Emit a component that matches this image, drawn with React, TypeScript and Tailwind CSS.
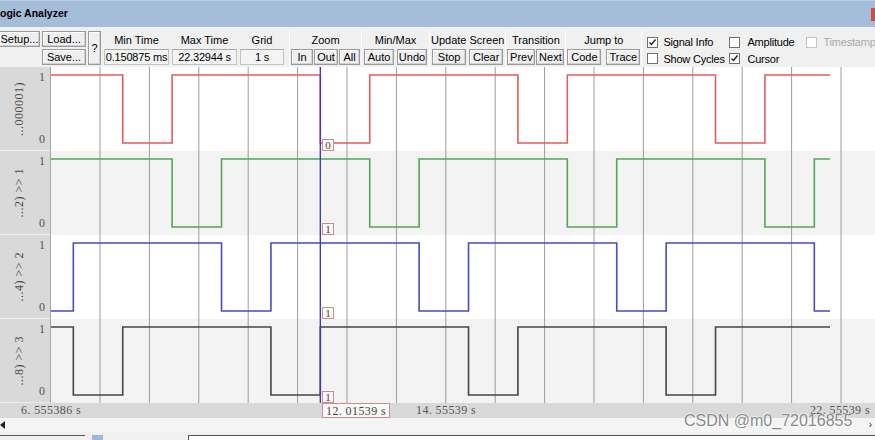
import React from "react";

// plot geometry, page x of grid line k = GRID0 + STEP * k
const GRID0 = 50.6;
const STEP = 49.4;
const PLOT_LEFT = 51;
const END_X = 830;
const HI = 8;
const LO = 76;

const xAt = (k: number) => GRID0 + STEP * k - PLOT_LEFT;

type Signal = {
  name: string;
  color: string;
  startHigh: boolean;
  edges: number[];
  cursor: string;
  alt: boolean;
};

const signals: Signal[] = [
  { name: "...000001)", color: "#e25d5d", startHigh: true, edges: [1, 2, 5, 6, 9, 10, 13, 14], cursor: "0", alt: false },
  { name: "...2) >> 1", color: "#55a655", startHigh: true, edges: [2, 3, 6, 7, 10, 11, 14, 15], cursor: "1", alt: true },
  { name: "...4) >> 2", color: "#4a4ac4", startHigh: false, edges: [0, 3, 4, 7, 8, 11, 12, 15], cursor: "1", alt: false },
  { name: "...8) >> 3", color: "#454545", startHigh: true, edges: [0, 1, 4, 5, 8, 9, 12, 13], cursor: "1", alt: true },
];

const gridLines = Array.from({ length: 16 }, (_, i) => xAt(i + 1));
const CURSOR_X = xAt(5.46);

function Btn({ label, w }: { label: string; w: string }) {
  return (
    <div
      className={`${w} h-[16px] flex items-center justify-center border border-[#9a9a9a] bg-[#efefef] shadow-[inset_-1px_-1px_0_#d2d2d2,inset_1px_1px_0_#ffffff] leading-none`}
    >
      {label}
    </div>
  );
}

function Field({ value, w }: { value: string; w: string }) {
  return (
    <div className={`${w} h-[16px] flex items-center justify-center border border-[#c4c4c4] border-t-[#a8a8a8] bg-[#f4f4f4] leading-none tracking-[-0.2px]`}>
      {value}
    </div>
  );
}

function Sep() {
  return <div className="w-px self-stretch bg-[#c8c8c8] border-r border-white" />;
}

function Check({ checked, disabled }: { checked?: boolean; disabled?: boolean }) {
  return (
    <div
      className={`w-[11px] h-[11px] shrink-0 border bg-white flex items-center justify-center ${
        disabled ? "border-[#c4c4c4]" : "border-[#707070]"
      }`}
    >
      {checked && (
        <svg width="9" height="9" viewBox="0 0 9 9">
          <path d="M1.5 4.5 L3.5 6.5 L7.5 1.5" fill="none" stroke="#222" strokeWidth="1.4" />
        </svg>
      )}
    </div>
  );
}

function Group({ title, children }: { title: string; children: React.ReactNode }) {
  return (
    <div className="flex flex-col items-center">
      <div className="h-[18px] flex items-center leading-none">{title}</div>
      <div className="flex gap-[1px]">{children}</div>
    </div>
  );
}

function Row({ s }: { s: Signal }) {
  let y = s.startHigh ? HI : LO;
  let d = `M0 ${y}`;
  for (const e of s.edges) {
    const x = xAt(e + 0.46);
    d += ` L${x} ${y}`;
    y = y === HI ? LO : HI;
    d += ` L${x} ${y}`;
  }
  d += ` L${END_X - PLOT_LEFT} ${y}`;

  return (
    <div className={`flex h-[84px] ${s.alt ? "bg-[#f3f3f3]" : "bg-white"}`}>
      <div className="relative w-[51px] shrink-0 bg-[#d9d9d9] border-r border-[#a3a3a3] border-b border-b-[#ededed] font-['Liberation_Serif',serif] text-[12px] text-[#555]">
        <span className="absolute right-[5px] top-[1px]">1</span>
        <span className="absolute right-[5px] bottom-[2px]">0</span>
        <div className="absolute left-[10px] top-0 bottom-0 flex items-center">
          <span className="[writing-mode:vertical-rl] rotate-180 whitespace-pre text-[12px] tracking-[0.5px] text-[#4a4a4a]">
            {s.name}
          </span>
        </div>
      </div>
      <div className="relative flex-1">
        <svg className="absolute inset-0" width="824" height="84">
          {gridLines.map((x) => (
            <line key={x} x1={x} y1={0} x2={x} y2={84} stroke="#9c9c9c" strokeWidth="1" />
          ))}
          <path d={d} fill="none" stroke={s.color} strokeWidth="1.6" />
          <line x1={CURSOR_X} y1={0} x2={CURSOR_X} y2={84} stroke="#3a3ac8" strokeWidth="1.4" />
        </svg>
        <span className="absolute left-[271px] top-[72px] w-[12px] h-[12px] border border-[#cf8a8a] bg-[#f8f8f8] flex items-center justify-center font-['Liberation_Serif',serif] text-[11px] leading-none text-[#444]">
          {s.cursor}
        </span>
      </div>
    </div>
  );
}

export default function App() {
  return (
    <div className="relative w-[875px] h-[440px] overflow-hidden bg-[#f0f0f0] font-['Liberation_Sans',Arial,sans-serif] text-[11px] text-black">
      {/* title bar */}
      <div className="h-[27px] bg-[#a4bdd8] border-t border-[#b8cde3] flex items-center justify-between">
        <span className="font-bold text-[10.5px]">ogic Analyzer</span>
        <div className="w-[4px] h-[13px] bg-[#d24b43] mt-[1px]" />
      </div>

      {/* toolbar */}
      <div className="h-[40px] flex items-stretch pt-[4px] pb-[2px] whitespace-nowrap">
        <div className="flex gap-[2px] -ml-[1px]">
          <div className="flex flex-col">
            <Btn label="Setup..." w="w-[41px]" />
          </div>
          <div className="flex flex-col gap-[2px]">
            <Btn label="Load..." w="w-[44px]" />
            <Btn label="Save..." w="w-[44px]" />
          </div>
          <div className="w-[13px] h-[34px] flex items-center justify-center border border-[#9a9a9a] bg-[#efefef] shadow-[inset_-1px_-1px_0_#d2d2d2,inset_1px_1px_0_#ffffff]">
            ?
          </div>
        </div>
        <div className="flex gap-[3px] ml-[3px] mr-[5px]">
          <Group title="Min Time">
            <Field value="0.150875 ms" w="w-[65px]" />
          </Group>
          <Group title="Max Time">
            <Field value="22.32944 s" w="w-[65px]" />
          </Group>
          <Group title="Grid">
            <Field value="1 s" w="w-[44px]" />
          </Group>
        </div>
        <Sep />
        <div className="px-[1px]">
          <Group title="Zoom">
            <Btn label="In" w="w-[22px]" />
            <Btn label="Out" w="w-[24px]" />
            <Btn label="All" w="w-[21px]" />
          </Group>
        </div>
        <div className="w-[1px]" />
        <Sep />
        <div className="px-[2px]">
          <Group title="Min/Max">
            <Btn label="Auto" w="w-[30px]" />
            <div className="w-px" />
            <Btn label="Undo" w="w-[30px]" />
          </Group>
        </div>
        <Sep />
        <div className="px-[1px]">
          <Group title="Update Screen">
            <Btn label="Stop" w="w-[34px]" />
            <div className="w-px" />
            <Btn label="Clear" w="w-[34px]" />
          </Group>
        </div>
        <Sep />
        <div className="px-[1px]">
          <Group title="Transition">
            <Btn label="Prev" w="w-[28px]" />
            <Btn label="Next" w="w-[28px]" />
          </Group>
        </div>
        <Sep />
        <div className="px-[1px]">
          <Group title="Jump to">
            <Btn label="Code" w="w-[34px]" />
            <div className="w-[3px]" />
            <Btn label="Trace" w="w-[34px]" />
          </Group>
        </div>
        <Sep />
        <div className="grid grid-cols-[82px_77px_80px] grid-rows-2 pl-[5px] pt-[5px] gap-y-[4px] tracking-[-0.2px]">
          <div className="flex items-center gap-[5px]">
            <Check checked />
            <span>Signal Info</span>
          </div>
          <div className="flex items-center gap-[7px]">
            <Check />
            <span>Amplitude</span>
          </div>
          <div className="flex items-center gap-[6px] text-[#aaaaaa]">
            <Check disabled />
            <span>Timestamp</span>
          </div>
          <div className="flex items-center gap-[5px]">
            <Check />
            <span>Show Cycles</span>
          </div>
          <div className="flex items-center gap-[7px]">
            <Check checked />
            <span>Cursor</span>
          </div>
        </div>
      </div>

      {/* signal rows */}
      <div className="flex flex-col">
        {signals.map((s) => (
          <Row key={s.name} s={s} />
        ))}
      </div>

      {/* time axis */}
      <div className="relative h-[15px] bg-[#d9d9d9] font-['Liberation_Serif',serif] text-[12px] text-[#555] leading-none tracking-[0.4px]">
        <span className="absolute left-[21px] top-[1px]">6. 555386 s</span>
        <span className="absolute left-[322px] top-0 h-[15px] px-[3px] flex items-center border border-[#cf8a8a] bg-[#fafafa] text-[#444]">
          12. 01539 s
        </span>
        <span className="absolute left-[416px] top-[1px]">14. 55539 s</span>
        <span className="absolute right-[5px] top-[1px]">22. 55539 s</span>
      </div>

      {/* scroll bar */}
      <div className="relative h-[14px] bg-[#f5f5f5] flex items-center">
        <svg width="5" height="8" viewBox="0 0 5 8">
          <path d="M0 4 L5 0 L5 8 Z" fill="#222" />
        </svg>
        <div className="ml-auto mr-[3px] text-[#333] text-[10px] leading-none">›</div>
      </div>

      {/* bottom strip */}
      <div className="relative h-[8px] bg-[#f0f0f0] flex items-start pt-[3px]">
        <div className="w-[85px] h-px bg-[#555]" />
        <div className="ml-[7px] w-[11px] h-[5px] bg-[#9bb9e0]" />
        <div className="ml-[85px] flex-1 h-[5px] border-t border-l border-[#555] bg-white" />
      </div>

      {/* watermark */}
      <div className="absolute left-[684px] top-[413px] text-[16px] text-[#8a8a8a] leading-none [text-shadow:0_0_2px_#ffffff,0_0_2px_#ffffff]">
        CSDN @m0_72016855
      </div>
    </div>
  );
}
